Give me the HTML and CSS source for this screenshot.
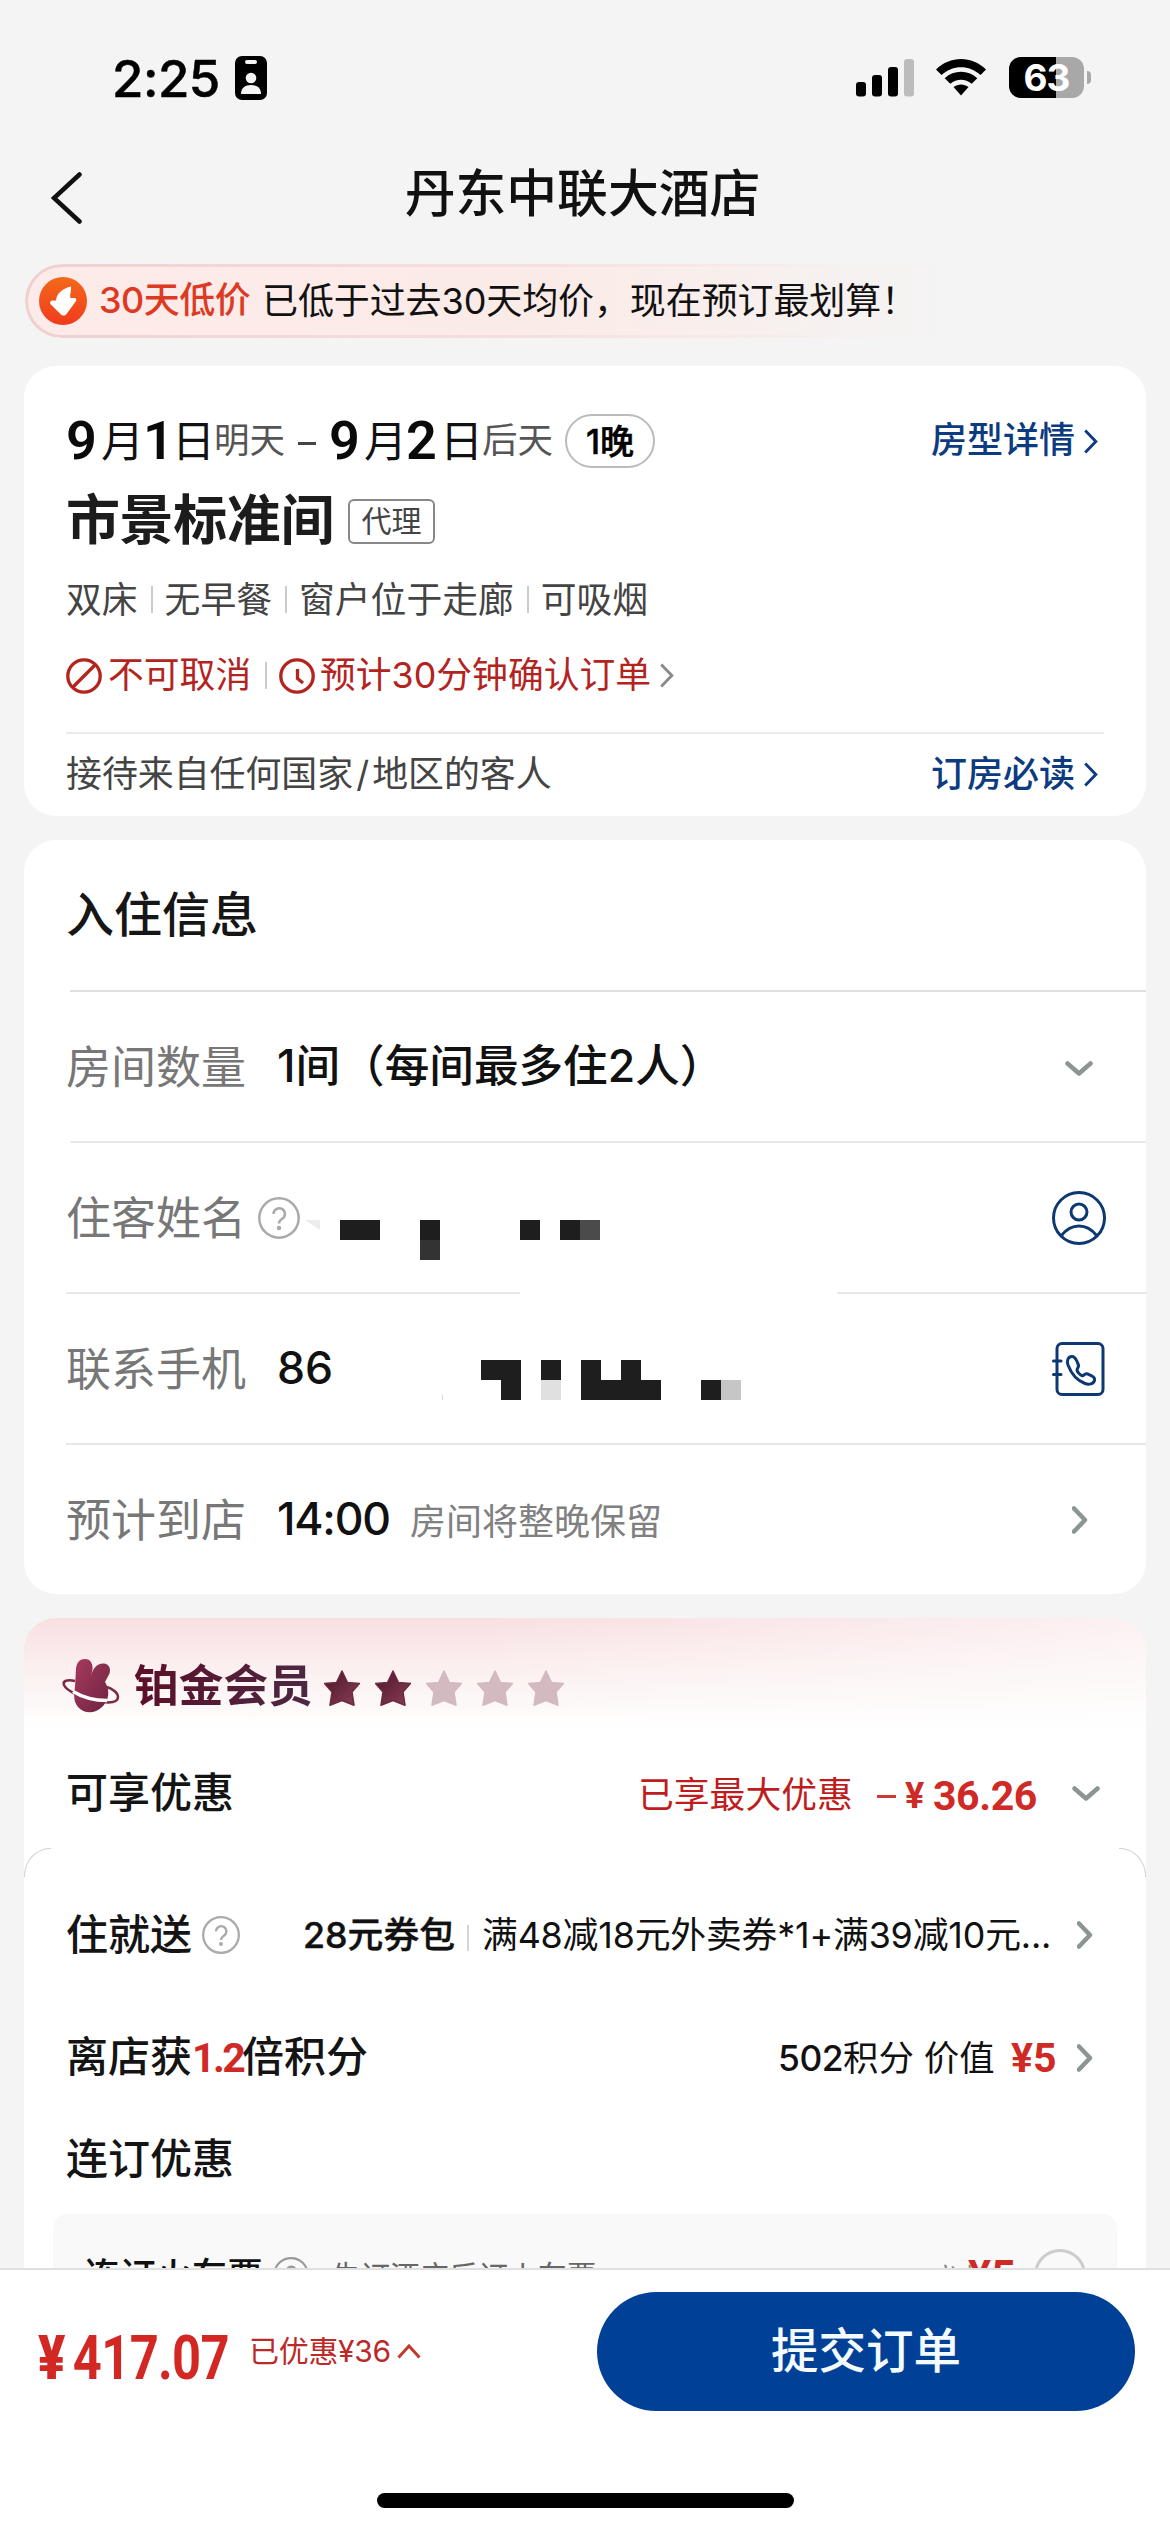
FILE: index.html
```html
<!DOCTYPE html>
<html lang="zh-CN">
<head>
<meta charset="utf-8">
<title>丹东中联大酒店</title>
<link rel="stylesheet" href="styles.css">
</head>
<body>
<svg width="0" height="0" class="defs">
  <defs>
    <linearGradient id="plum" x1="0" y1="0" x2="1" y2="1"><stop offset="0" stop-color="#a93a5e"/><stop offset="1" stop-color="#6b2340"/></linearGradient>
    <linearGradient id="flame" x1="0" y1="0" x2="0" y2="1"><stop offset="0" stop-color="#f26a1b"/><stop offset="1" stop-color="#f13a1c"/></linearGradient>
    <linearGradient id="starfill" x1="0" y1="0" x2="1" y2="1"><stop offset="0" stop-color="#4a1426"/><stop offset="1" stop-color="#8a3f58"/></linearGradient>
    <symbol id="right" viewBox="0 0 16 28"><path d="M2 2.5 13 14 2 25.500"/></symbol>
    <symbol id="down" viewBox="0 0 28 16"><path d="M2.500 2.500 14 12.500 25.500 2.500"/></symbol>
    <symbol id="help" viewBox="0 0 42 42"><circle cx="21" cy="21" r="19.700"/><path class="mark" d="M15.500 17a5.700 5.700 0 1 1 8.700 4.800c-2.200 1.400-3.200 2.300-3.200 4.700"/><circle class="dot" cx="21" cy="31" r="1"/></symbol>
    <symbol id="star" viewBox="0 0 36 36"><path stroke-width="1.500" stroke-linejoin="round" d="M18 1 23.500 12.500 35.500 13.500 28 22 30 35.200 18 30.500 6 35.200 8 22 .5 13.500 12.500 12.500Z"/></symbol>
  </defs>
</svg>

<header class="status">
  <span class="time">2:25</span>
  <svg class="idcard" viewBox="0 0 32 44"><rect width="32" height="44" rx="7"/><rect x="10" y="4" width="12" height="4" rx="2" fill="#f4f4f4"/><circle cx="16" cy="22" r="5.300" fill="#f4f4f4"/><path d="M6 38c0-6 4-9 10-9s10 3 10 9z" fill="#f4f4f4"/></svg>
  <svg class="signal" viewBox="0 0 58 38"><rect x="0" y="23" width="10" height="14.500" rx="3"/><rect x="16" y="16" width="10" height="21.500" rx="3"/><rect x="32" y="8" width="10" height="29.500" rx="3"/><rect x="48" y="0" width="10" height="37.500" rx="3" fill="#bcbcbc"/></svg>
  <svg class="wifi" viewBox="0 0 50 37"><path d="M0 10.500C14-3.500 36-3.500 50 10.500L44.500 16C33 5.500 17 5.500 5.500 16Z"/><path d="M8.700 19.200c9.500-8.500 23.100-8.500 32.600 0l-5.600 5.600c-6.500-5.500-14.900-5.500-21.400 0Z"/><path d="M17.500 28c4.500-3.400 10.500-3.400 15 0L25 36.500Z"/></svg>
  <div class="battery"><span>63</span></div>
  <i class="nub"></i>
</header>

<nav class="titlebar">
  <svg class="back" viewBox="0 0 31 52"><path d="M28.500 2.500 3 26 28.500 49.500"/></svg>
  <h1>丹东中联大酒店</h1>
</nav>

<div class="promo">
  <svg class="promo-icon" viewBox="0 0 48 48"><circle cx="24" cy="24" r="24" fill="url(#flame)"/><path d="M32 9.500c.5 4.500-1.500 8-.5 11.500h4c2 0 2.300 2 1.200 3.500L27.500 37c-1.500 2-4.500 2-6 0l-9.700-9.500c-1.500-1.500-.8-3.500 1.200-4h4C17.500 16 24 11.500 32 9.500Z" fill="#fff"/></svg>
  <b>30天低价</b><span>已低于过去30天均价，现在预订最划算！</span>
</div>

<main>
  <section class="card stay">
    <div class="dates">
      <span class="num w9">9</span><span class="unit wa">月</span><span class="num w1">1</span><span class="unit wb">日</span><span class="rel">明天</span>
      <i class="dash"></i>
      <span class="num w9b">9</span><span class="unit wa">月</span><span class="num w2">2</span><span class="unit wc">日</span><span class="rel relb">后天</span>
      <span class="nights">1晚</span>
      <a class="link">房型详情<svg class="chev"><use href="#right"/></svg></a>
    </div>
    <div class="room"><h2>市景标准间</h2><span class="tag">代理</span></div>
    <div class="features"><span>双床</span><span>无早餐</span><span>窗户位于走廊</span><span>可吸烟</span></div>
    <div class="policy">
      <svg viewBox="0 0 36 36"><circle cx="18" cy="18" r="16.200"/><path d="M6.500 29.500 29.500 6.500"/></svg><span class="nocancel">不可取消</span><i></i>
      <svg viewBox="0 0 36 36"><circle cx="18" cy="18" r="16.200"/><path d="M18.500 11v9.500l5.500 4.500"/></svg><span class="confirm">预计30分钟确认订单</span>
      <svg class="chev gray"><use href="#right"/></svg>
    </div>
    <div class="guests"><span>接待来自任何国家<em>/</em>地区的客人</span><a class="link">订房必读<svg class="chev"><use href="#right"/></svg></a></div>
  </section>

  <section class="card info">
    <h3>入住信息</h3>
    <div class="row first">
      <label>房间数量</label><strong>1间（每间最多住2人）</strong>
      <svg class="arrow-down"><use href="#down"/></svg>
    </div>
    <div class="row">
      <label>住客姓名</label><svg class="help"><use href="#help"/></svg>
      <svg class="mosaic" viewBox="0 0 300 40"><path d="M0 0h15v10z" fill="#ececec"/><path fill="#1e1e1e" d="M35 0h40v20h-40zM115 0h20v20h-20zM215 0h20v20h-20zM255 0h20v20h-20z"/><path fill="#333" d="M115 20h20v20h-20z"/><path fill="#4b4b4b" d="M275 0h20v20h-20z"/></svg>
      <svg class="ico" viewBox="0 0 54 54"><circle cx="27" cy="27" r="25.500"/><circle cx="27" cy="21" r="8"/><path d="M9.500 44.500c5-6.500 10.500-9.500 17.500-9.500s12.500 3 17.500 9.500"/></svg>
    </div>
    <div class="row gap">
      <label>联系手机</label><strong>86</strong>
      <svg class="mosaic phone" viewBox="0 0 300 40"><path fill="#1e1e1e" d="M39 0h40v40h-20v-20h-20zM99 0h20v20h-20zM139 0h20v20h20v-20h20v20h20v20h-80zM259 20h20v20h-20z"/><path fill="#e0e0e0" d="M99 20h20v20h-20z"/><path fill="#c6c6c6" d="M279 20h20v20h-20z"/><path fill="#ddd" d="M0 35h1v5h-1z"/></svg>
      <svg class="ico" viewBox="0 0 54 54"><rect x="5" y="1.500" width="46" height="51" rx="5"/><path d="M1.500 19H9M1.500 32.500H9"/><path d="M20 14.500c-4 0-5.500 4-4 8.500 3 8 9 15.500 17 18.500 4 1.500 8.500.5 9.500-3 .5-2-.5-3.500-2.500-4.500-4-2-6-3.500-8-1-1.500 1.500-3 .5-5-1.500s-2.500-3.500-1.500-5c2-2.500 1-4-.5-7-1.300-3-2.500-5-5-5Z"/></svg>
    </div>
    <div class="row">
      <label>预计到店</label><strong class="arrival">14:00</strong><small>房间将整晚保留</small>
      <svg class="arrow-right"><use href="#right"/></svg>
    </div>
  </section>

  <section class="card member">
    <div class="level">
      <svg class="bunny" viewBox="0 0 58 54"><path fill="none" stroke="#7b2b47" stroke-width="2.500" d="M13 22C5 20 .5 22 2 26c2.500 6 18 13 33 16 14 3 21 1 21-4 0-4-5-8-11-10"/><path fill="url(#plum)" d="M14 9C15 3 18 0 23 0c5 0 8 4 7.500 10L29 17C31 9 35 4 42 4.500c5 .5 7 5 5.500 10L43 23c6 10 3 19-3 25-7 7-18 7-24 0-5-6-4-13-3-20Z"/><path fill="none" stroke="#fff" stroke-width="3.500" d="M11 32.500C20 38 33 41.500 45 41.500"/></svg>
      <h4>铂金会员</h4>
      <div class="stars"><svg><use href="#star"/></svg><svg><use href="#star"/></svg><svg class="off"><use href="#star"/></svg><svg class="off"><use href="#star"/></svg><svg class="off"><use href="#star"/></svg></div>
    </div>
    <div class="benefit">
      <h5>可享优惠</h5>
      <span class="best">已享最大优惠</span><i class="minus"></i><b class="yen">¥</b><b class="amount">36.26</b>
      <svg class="arrow-down"><use href="#down"/></svg>
    </div>
    <div class="extras">
      <div class="gift">
        <h5>住就送</h5><svg class="help"><use href="#help"/></svg>
        <b>28元券包</b><i></i><span>满48减18元外卖券*1+满39减10元...</span>
        <svg class="arrow-right"><use href="#right"/></svg>
      </div>
      <div class="points">
        <h5>离店获<em>1.2</em>倍积分</h5>
        <span class="pts"><b>502</b>积分 价值</span><strong>¥5</strong>
        <svg class="arrow-right"><use href="#right"/></svg>
      </div>
      <h5 class="combo-title">连订优惠</h5>
      <div class="combo">
        <b>连订火车票</b><svg class="help"><use href="#help"/></svg><span>先订酒店后订火车票</span>
        <small>立减</small><strong>¥5</strong><i></i>
      </div>
    </div>
  </section>
</main>

<footer>
  <div class="pay">
    <span class="price"><b>¥</b>417.07</span>
    <span class="saved">已优惠¥36</span><svg viewBox="0 0 24 15"><path d="M1.500 13.500 12 2 22.500 13.500"/></svg>
    <button>提交订单</button>
  </div>
  <i class="home"></i>
</footer>
</body>
</html>
```
FILE: styles.css
```css
* { box-sizing: border-box; margin: 0; padding: 0; }
body {
  width: 1170px; height: 2532px; overflow: hidden; background: #f4f4f4; color: #111;
  font-family: Inter, "Noto Sans CJK SC", sans-serif; font-size: 36px; line-height: 1.2;
  display: flex; flex-direction: column; white-space: nowrap;
  text-spacing-trim: space-all;
}
i, em { font-style: normal; }
svg { flex: none; display: block; }
.defs { position: absolute; }
h1, h2, h3, h4, h5 { font-weight: 500; }

.status { height: 140px; flex: none; display: flex; align-items: flex-start; padding: 56px 0 0 112px; }
.time { width: 107px; font-size: 51px; font-weight: 500; line-height: 45px; letter-spacing: -.5px; color: #000; -webkit-text-stroke: .5px #000; }
.idcard { width: 32px; height: 44px; margin-left: 16px; }
.signal { width: 58px; height: 38px; margin: 3px 0 0 589px; }
.wifi { width: 50px; height: 37px; margin: 3px 0 0 22px; }
.battery { width: 75px; height: 41px; margin: 1px 0 0 23px; border-radius: 12px; background: linear-gradient(90deg, #000 47px, #a8a8a8 47px); color: #fff; text-align: center; }
.battery span { display: block; font-size: 37px; font-weight: 700; line-height: 42px; letter-spacing: -1px; }
.nub { width: 4px; height: 13px; margin: 15px 0 0 3px; border-radius: 0 4px 4px 0; background: #a8a8a8; }

.titlebar { height: 124px; flex: none; display: flex; align-items: flex-start; padding: 31px 0 0 51px; }
.back { width: 31px; height: 52px; margin-top: 1px; fill: none; stroke: #111; stroke-width: 4.5; stroke-linecap: round; }
h1 { width: 1001px; font-size: 50.8px; line-height: 45px; text-align: center; }

.promo { height: 74px; flex: none; display: flex; align-items: center; margin: 0 210px 28px 25px; padding-left: 14px; border-radius: 37px 0 0 37px;
  background: linear-gradient(90deg, #fdebe9, #fbebe7 55%, #f4f4f4); position: relative; }
.promo::before { content: ""; position: absolute; inset: 0; border: 3px solid #efcfcf; border-right: 0; border-radius: 37px 0 0 37px; mask-image: linear-gradient(90deg, #000, transparent 88%); }
.promo-icon { width: 48px; height: 48px; }
.promo b { width: 163px; margin-left: 12px; font-weight: 500; letter-spacing: -.5px; color: #dd3a24; }
.promo span { padding-top: 1px; color: #111; letter-spacing: -.1px; }

main { flex: none; display: flex; flex-direction: column; gap: 24px; padding: 0 24px; }
.card { background: #fff; border-radius: 32px; }

.stay { height: 450px; padding: 0 42px; }
.dates { height: 112px; display: flex; align-items: center; padding-top: 38px; }
.num { font: 600 54px/54px Roboto, Inter; color: #0a0a0a; }
.unit { font-size: 43px; font-weight: 400; line-height: 54px; color: #111; }
.w9 { width: 35px; } .wa { width: 42px; } .w1 { width: 29px; } .wb { width: 42px; }
.w9b { width: 35px; } .w2 { width: 34px; } .wc { width: 42px; }
.rel { width: 71px; font-size: 35.5px; color: #555; }
.dash { width: 18px; height: 3px; margin: 4px 13px 0 13px; background: #444; }
.nights { width: 90px; height: 54px; margin-left: 12px; border: 2px solid #bbb; border-radius: 27px; font-size: 34px; font-weight: 500; line-height: 51px; text-align: center; color: #000; -webkit-text-stroke: .5px #000; }
.link { margin-left: auto; padding-right: 5px; display: flex; align-items: center; color: #0c3b80; font-weight: 500; }
.chev { width: 16px; height: 27px; margin-left: 8px; fill: none; stroke: #0c3b80; stroke-width: 3; }
.gray { stroke: #8a8a8a; }
.room { height: 90px; display: flex; align-items: center; padding-bottom: 3px; }
h2 { font-size: 54px; font-weight: 700; letter-spacing: -.4px; color: #1c1c1c; }
.tag { width: 87px; height: 45px; margin-left: 14px; border: 2px solid #888; border-radius: 6px; font-size: 30px; line-height: 41px; text-align: center; color: #444; }
.features { height: 64px; display: flex; align-items: center; }
.features span { color: #444; font-size: 35.8px; }
.features span + span { margin-left: 13px; padding-left: 14px; background: linear-gradient(#ccc, #ccc) 0 50% / 2px 27px no-repeat; }
.policy { height: 100px; display: flex; align-items: center; padding-bottom: 13px; color: #b3241f; }
.policy svg { width: 36px; height: 36px; fill: none; stroke: #b3241f; stroke-width: 3.3; }
.policy .chev { width: 16px; height: 27px; stroke: #8a8a8a; stroke-width: 3; }
.policy i { width: 2px; height: 27px; margin: 0 12px 0 14px; background: #ccc; }
.nocancel { width: 143px; margin-left: 6px; font-size: 35.8px; }
.confirm { width: 331px; margin-left: 5px; font-size: 35.8px; }
.guests { height: 84px; display: flex; align-items: center; border-top: 2px solid #ebebeb; color: #444; font-size: 35.9px; }
.guests em { display: inline-block; width: 19px; text-align: center; }
.guests .link { font-size: 36px; padding-bottom: 1px; }

.info { height: 754px; padding-left: 42px; }
h3 { height: 150px; font-size: 48px; line-height: 149px; color: #161616; }
.row { height: 151px; display: flex; align-items: center; border-top: 2px solid #ececec; position: relative; padding-right: 40px; }
.row:last-child { border-top-color: #e8e8e8; }
.row label { width: 211px; padding-top: 2px; font-size: 45px; color: #777; }
.row strong { padding-top: 1px; font-size: 44.6px; font-weight: 500; color: #111; }
.row .arrival { width: 111px; letter-spacing: -1.2px; }
.row small { margin: 7px 0 0 22px; font-size: 36px; color: #808080; }
.row svg:last-child { margin-left: auto; }
.row .help { margin-left: -19px; }
.first { border-image: linear-gradient(90deg, transparent 6px, #e0e0e0 6px) 2; }
.first + .row { border-image: linear-gradient(90deg, transparent 6px, #e8e8e8 6px) 2; }
.row.gap { border-image: linear-gradient(90deg, #e8e8e8 454px, transparent 454px 770px, #e8e8e8 770px) 2; }
.help { width: 42px; height: 42px; fill: none; stroke: #aaa; stroke-width: 2.5; }
.help .mark { stroke-width: 3; }
.mosaic { width: 300px; height: 40px; }
.help + .mosaic { margin: 44px 0 0 5px; }
.mosaic.phone { margin: 22px 0 0 109px; }
.ico { width: 54px; height: 54px; fill: none; stroke: #0d3872; stroke-width: 3; stroke-linecap: round; stroke-linejoin: round; }
.arrow-down { width: 28px; height: 16px; fill: none; stroke: #8d9594; stroke-width: 4.5; stroke-linecap: round; stroke-linejoin: round; }
.arrow-right { width: 16px; height: 28px; fill: none; stroke: #8d9594; stroke-width: 4.5; stroke-linecap: round; stroke-linejoin: round; }
.row .arrow-down { margin: 5px 13px 0 0; }
.row .arrow-right { margin-right: 18px; }

.member { height: 651px; overflow: hidden; border-radius: 32px 32px 0 0; background: linear-gradient(to left, rgba(255,255,255,.55), transparent 60%) 0 0 / 100% 110px no-repeat, linear-gradient(#f8dfe2, #fbeeee 45px, #fff 112px); }
.level { height: 132px; display: flex; align-items: center; padding: 4px 0 0 38px; }
.bunny { width: 58px; height: 54px; }
h4 { width: 190px; margin-left: 14px; padding-top: 1px; font-size: 44.7px; font-weight: 600; background: linear-gradient(90deg, #5c0f29, #4b2a45); background-clip: text; -webkit-background-clip: text; color: transparent; }
.stars { display: flex; gap: 15px; padding-top: 4px; }
.stars svg { width: 36px; height: 36px; fill: url(#starfill); stroke: #6b2a40; }
.stars .off { fill: #d2bac0; stroke: #d2bac0; }
h5 { font-size: 42px; color: #141414; }
.benefit { height: 98px; display: flex; align-items: center; padding: 0 46px 11px 42px; color: #bf1d1d; }
.best { width: 215px; margin-left: auto; padding-top: 4px; font-size: 35.8px; }
.minus { width: 19px; height: 3px; margin: 6px 9px 0 24px; background: #cc3a33; }
.yen { width: 28px; padding-top: 4px; font: 700 36px/42px Roboto; color: #cf2a26; }
.amount { width: 106px; padding-top: 4px; font: 700 41px/42px Roboto; letter-spacing: -.4px; color: #cf2a26; }
.benefit .arrow-down { margin-left: 33px; }
.extras { height: 421px; border-radius: 32px 32px 0 0; background: #fff; padding-top: 31px; position: relative; }
.extras::before, .extras::after { content: ""; position: absolute; top: 0; width: 26px; height: 28px; border-top: 1px solid #d2d2d2; }
.extras::before { left: 0; border-left: 1px solid #d2d2d2; border-top-left-radius: 26px 28px; }
.extras::after { right: 0; border-right: 1px solid #d2d2d2; border-top-right-radius: 26px 28px; }
.gift { height: 112px; display: flex; align-items: center; padding: 0 53px 0 42px; }
.gift h5 { width: 136px; }
.gift .help { width: 38px; height: 38px; }
.gift b { width: 152px; margin-left: 63px; font-size: 35.8px; font-weight: 500; -webkit-text-stroke: .4px #111; }
.gift i { width: 2px; height: 26px; margin: 5px 13px 0 12px; background: #d5d5d5; }
.gift span { width: 572px; font-size: 35.8px; letter-spacing: -.15px; }
.gift .arrow-right, .points .arrow-right { margin-left: auto; }
.points { height: 130px; display: flex; align-items: center; padding: 3px 53px 0 42px; }
.points em { display: inline-block; width: 50px; font: 700 41px/42px Roboto; letter-spacing: -2.6px; color: #cf2a26; }
.pts { width: 233px; margin-left: auto; padding-top: 4px; font-size: 35.4px; }
.pts b { font-weight: 500; letter-spacing: -.5px; }
.points strong { width: 48px; font: 700 41px/42px Roboto; color: #cf2a26; }
.points .arrow-right { margin-left: 18px; }
.combo-title { height: 93px; padding-left: 42px; line-height: 76px; }
.combo { height: 120px; margin: 0 29px; padding: 35px 31px 0; border-radius: 14px; background: #f9f9f9; display: flex; align-items: flex-start; }
.combo b { width: 189px; font-size: 35.8px; font-weight: 500; line-height: 54px; }
.combo .help { width: 36px; height: 36px; margin-top: 8px; stroke: #999; }
.combo span { margin-left: 22px; font-size: 29.5px; line-height: 54px; color: #666; }
.combo small { width: 36px; margin: 0 0 0 auto; font-size: 28px; line-height: 60px; letter-spacing: -10px; color: #888; }
.combo strong { width: 66px; font: 700 43px/53px Roboto; color: #cf2a26; }
.combo i { width: 52px; height: 52px; border: 3px solid #ccc; border-radius: 50%; }

footer { flex: 1; background: #fff; border-top: 2px solid #e0e0e0; position: relative; margin-top: -1px; }
.pay { height: 162px; display: flex; align-items: center; padding-left: 38px; }
.price { display: inline-block; width: 211px; padding-top: 13px; font: 700 61px/62px Roboto; color: #d32724; transform: scaleX(.83); transform-origin: 0 50%; letter-spacing: -.8px; }
.price b { display: inline-block; width: 42px; }
.saved { width: 148px; font-size: 30px; letter-spacing: -.3px; color: #bb2a29; }
.pay svg { width: 24px; height: 15px; fill: none; stroke: #c0392b; stroke-width: 3; }
.pay button { width: 538px; height: 119px; margin-left: auto; margin-right: 35px; border: 0; border-radius: 60px; background: #004096; color: #f4fbff; font: 500 47.5px/116px Inter, "Noto Sans CJK SC", sans-serif; }
.home { display: block; width: 417px; height: 15px; margin: 61px auto 0; border-radius: 8px; background: #000; }
```
